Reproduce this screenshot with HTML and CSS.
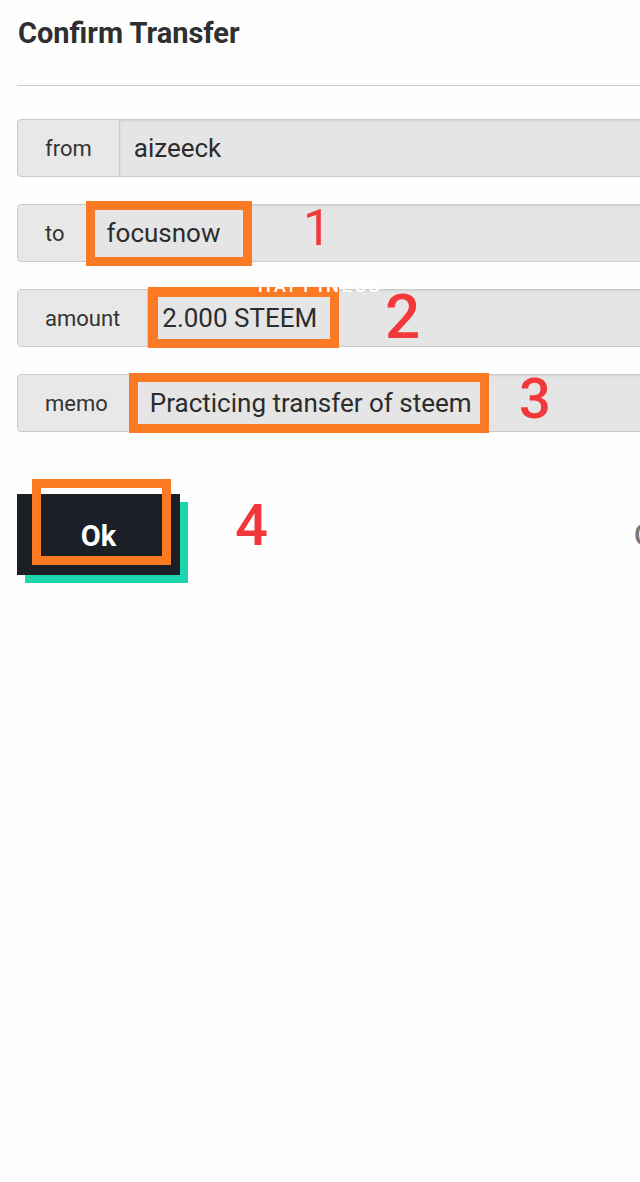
FILE: index.html
```html
<!DOCTYPE html>
<html>
<head>
<meta charset="utf-8">
<link rel="stylesheet" href="styles.css">
</head>
<body>
<div class="page">
  <h1 class="title">Confirm Transfer</h1>
  <hr class="rule">
  <div class="rows">
    <div class="row"><div class="label">from</div><div class="value">aizeeck</div></div>
    <div class="row"><div class="label">to</div><div class="value">focusnow</div></div>
    <div class="row"><div class="label">amount</div><div class="value">2.000 STEEM</div></div>
    <div class="row"><div class="label">memo</div><div class="value">Practicing transfer of steem</div></div>
  </div>
  <div class="actions">
    <button class="ok">Ok</button>
    <span class="cancel">Cancel</span>
  </div>

  <div class="box box1"></div>
  <div class="box box2"></div>
  <div class="box box3"></div>
  <div class="box box4"></div>
  <div class="num n1">1</div>
  <div class="num n2">2</div>
  <div class="num n3">3</div>
  <div class="num n4">4</div>

  <div class="ghost">HAPPINESS</div>
</div>
</body>
</html>
```

FILE: styles.css
```css
html, body {
  margin: 0;
  padding: 0;
  background: #fefefe;
  overflow: hidden;
}
body {
  width: 640px;
  height: 1182px;
  font-family: Roboto, "Liberation Sans", sans-serif;
  color: #333;
}
.page {
  position: relative;
  width: 640px;
  height: 1182px;
  padding: 16px 0 0 17px;
  box-sizing: border-box;
}
.title {
  margin: 0 0 0 1px;
  font-size: 29px;
  line-height: 34px;
  font-weight: 700;
  color: #2f2f2f;
}
.rule {
  margin: 35px 0 0 0;
  border: 0;
  border-top: 1px solid #cbcbcb;
  width: 700px;
}
.rows {
  margin-top: 33px;
  display: flex;
  flex-direction: column;
  gap: 27px;
  width: 720px;
}
.row {
  display: flex;
  height: 58px;
  box-sizing: border-box;
  border: 1px solid #cacaca;
  border-radius: 4px 0 0 4px;
  background: #e5e5e5;
}
.label {
  display: flex;
  align-items: center;
  padding: 0 27px;
  font-size: 22px;
  color: #333;
  background: #e8e8e8;
  border-right: 1px solid #cacaca;
  border-radius: 4px 0 0 4px;
}
.value {
  flex: 1;
  display: flex;
  align-items: center;
  padding: 0 14px;
  font-size: 26px;
  color: #2c2c2c;
  box-shadow: inset 0 1px 2px rgba(0,0,0,0.08);
}
.actions {
  margin-top: 62px;
  display: flex;
  align-items: center;
  width: 720px;
}
.ok {
  flex-shrink: 0;
  width: 163px;
  height: 81px;
  border: 0;
  background: #1b2026;
  color: #fff;
  font-family: Roboto, "Liberation Sans", sans-serif;
  font-size: 29px;
  font-weight: 700;
  padding-top: 4px;
  box-shadow: 8px 8px 0 #1dd6ae;
}
.cancel {
  flex-shrink: 0;
  margin-left: 454px;
  font-size: 29px;
  font-weight: 500;
  color: #777;
  white-space: nowrap;
}
.ghost {
  position: absolute;
  left: 258px;
  top: 277px;
  font-size: 18px;
  letter-spacing: 3px;
  color: #fff;
  font-weight: 500;
  line-height: 1;
  z-index: 2;
}
.box {
  position: absolute;
  border: 9px solid #fd7a24;
  box-sizing: border-box;
}
.box1 { left: 86px; top: 201px; width: 166px; height: 65px; }
.box2 { left: 148px; top: 287px; width: 191px; height: 61px; border-width: 10px 9px 9px 10px; }
.box3 { left: 129px; top: 373px; width: 360px; height: 60px; }
.box4 { left: 32px; top: 479px; width: 139px; height: 86px; }
.num {
  position: absolute;
  color: #f2383b;
  line-height: 1;
}
.n1 { left: 303px; top: 203px; font-size: 50px; font-weight: 400; }
.n2 { left: 385px; top: 286px; font-size: 62px; font-weight: 500; }
.n3 { left: 519px; top: 371px; font-size: 56px; font-weight: 500; }
.n4 { left: 235px; top: 496px; font-size: 58px; font-weight: 500; }
```
